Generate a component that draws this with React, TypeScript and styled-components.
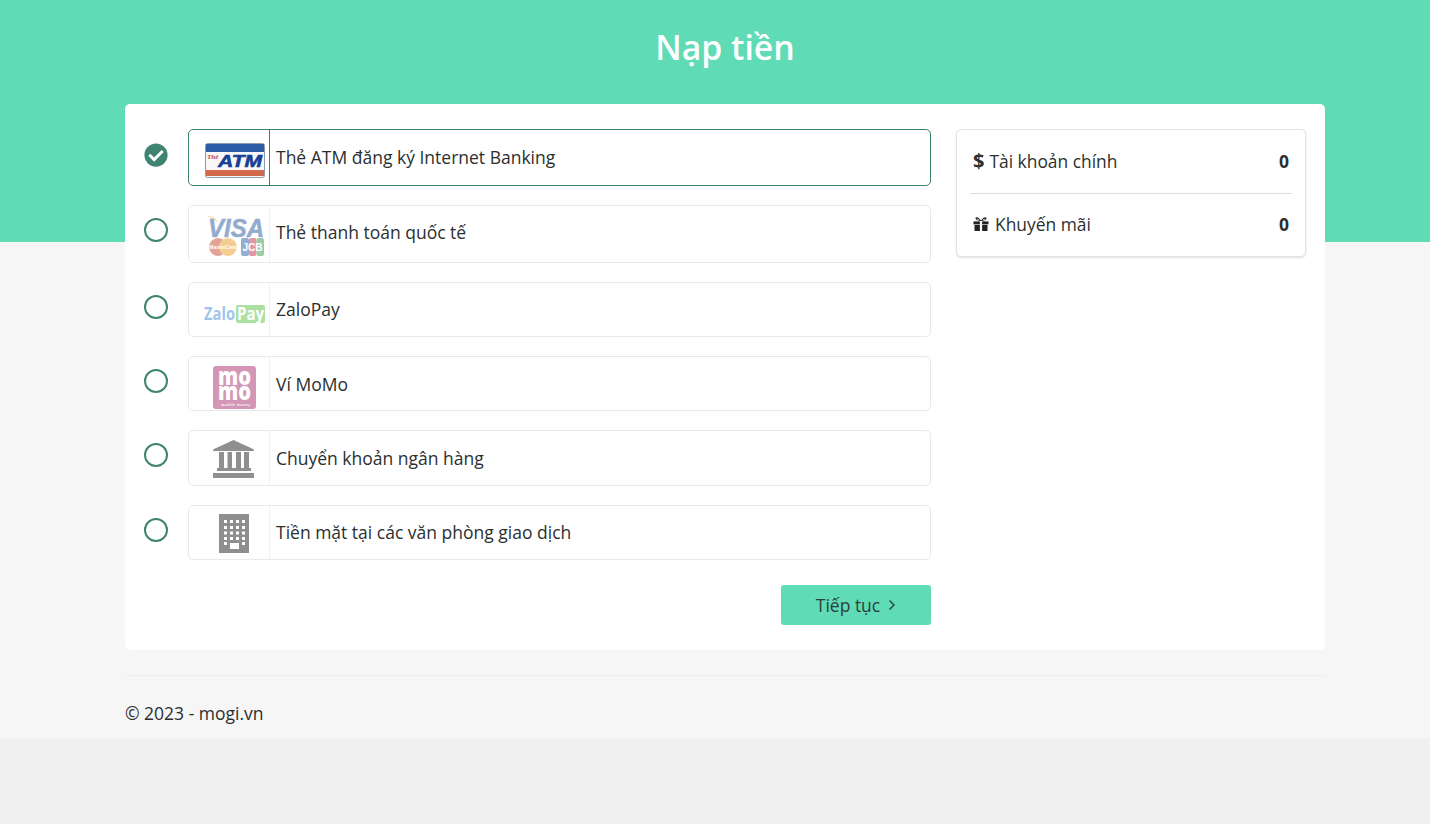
import styled, { createGlobalStyle } from "styled-components";
import { FaCheckCircle } from "react-icons/fa";
import { ReactNode } from "react";

const GlobalStyle = createGlobalStyle`
  html, body {
    margin: 0;
    padding: 0;
    background: #f0f0f0;
    font-family: "Open Sans", "Liberation Sans", sans-serif;
    color: #2b2f30;
  }
`;

const Page = styled.div`
  background: #f6f6f6;
  height: 738px;
`;

const Banner = styled.header`
  height: 242px;
  padding-left: 20px;
  box-sizing: border-box;
  background: #5fdbb6;
`;

const Title = styled.h1`
  margin: 0;
  color: #fff;
  font-size: 33.8px;
  font-weight: 600;
  line-height: 95px;
  text-align: center;
`;

const Container = styled.main`
  width: 1200px;
  margin: -138px 0 0 125px;
`;

const Card = styled.section`
  display: grid;
  grid-template-columns: 787px 350px;
  column-gap: 25px;
  padding: 25px 19px;
  background: #fff;
  border-radius: 5px;
`;

const MethodList = styled.div`
  display: flex;
  flex-direction: column;
  gap: 19px;
`;

const MethodLine = styled.label`
  display: flex;
  gap: 20px;
  align-items: flex-start;
`;

const Radio = styled.span`
  flex: none;
  width: 24px;
  height: 24px;
  margin-top: 13px;
  box-sizing: border-box;
  border: 2px solid #3f8471;
  border-radius: 50%;
`;

const Checked = styled(FaCheckCircle)`
  flex: none;
  width: 24px;
  height: 24px;
  margin-top: 14px;
  color: #3f8471;
`;

const MethodBox = styled.div<{ $height: number; $active?: boolean }>`
  flex: 1;
  display: flex;
  box-sizing: border-box;
  height: ${(p) => p.$height}px;
  border: 1px solid ${(p) => (p.$active ? "#3a8170" : "#e9e9e9")};
  border-radius: 5px;
`;

const LogoCell = styled.div<{ $active?: boolean }>`
  flex: none;
  box-sizing: border-box;
  width: 81px;
  padding: 9px 0 0 10px;
  border-right: 1px solid ${(p) => (p.$active ? "#3a8170" : "#f0f0f0")};
  display: flex;
  justify-content: center;
  align-items: flex-start;
`;

const LogoSvg = styled.svg<{ $faded?: boolean }>`
  width: 62px;
  height: 44px;
  overflow: visible;
  opacity: ${(p) => (p.$faded ? 0.5 : 1)};
`;

const MethodLabel = styled.span<{ $lineHeight: number }>`
  padding-left: 6px;
  font-size: 17.5px;
  line-height: ${(p) => p.$lineHeight}px;
`;

const Actions = styled.div`
  display: flex;
  justify-content: flex-end;
  margin-top: 6px;
`;

const NextButton = styled.button`
  display: flex;
  align-items: center;
  justify-content: center;
  gap: 8px;
  width: 150px;
  height: 40px;
  border: 0;
  border-radius: 3px;
  background: #5fdbb6;
  color: #2b3f3c;
  font-family: inherit;
  font-size: 17.5px;
`;

const Balance = styled.aside`
  align-self: start;
  box-sizing: border-box;
  height: 128px;
  padding: 0 13px;
  background: #fff;
  border: 1px solid #e3e3e3;
  border-radius: 5px;
  box-shadow: 0 1px 2px rgba(0, 0, 0, 0.12);
`;

const BalanceRow = styled.div`
  display: flex;
  align-items: center;
  justify-content: space-between;
  box-sizing: border-box;
  height: 63px;
  padding: 0 3px 2px;
  font-size: 17.4px;
  & + & {
    border-top: 1px solid #dcdcdc;
    padding-bottom: 3px;
  }
`;

const BalanceName = styled.span`
  display: flex;
  align-items: center;
  gap: 6px;
`;

const Dollar = styled.b`
  font-size: 20px;
  font-weight: 700;
  line-height: 24px;
  margin-right: -1px;
`;

const Amount = styled.b`
  font-weight: 700;
  font-size: 17.5px;
`;

const Footer = styled.footer`
  margin-top: 25px;
  border-top: 1px solid #eeeeee;
  padding-top: 23px;
  font-size: 17.5px;
  line-height: 28px;
`;

function AtmLogo() {
  return (
    <LogoSvg viewBox="0 0 62 44">
      <rect x="2.5" y="4.5" width="59" height="34" rx="2" fill="#f8f8fa" stroke="#8f9aa8" />
      <rect x="3" y="5" width="58" height="8" fill="#2d5ca6" />
      <rect x="3" y="31" width="58" height="6" fill="#d2694a" />
      <text x="4" y="20" fontSize="7" fontWeight="700" fontStyle="italic" fill="#c8402c" fontFamily="Liberation Serif, serif">
        Thẻ
      </text>
      <text
        x="15"
        y="28"
        fontSize="17"
        fontWeight="700"
        fontStyle="italic"
        fill="#173f94"
        stroke="#173f94"
        strokeWidth="0.6"
        fontFamily="Liberation Sans, sans-serif"
        textLength="44"
        lengthAdjust="spacingAndGlyphs"
      >
        ATM
      </text>
    </LogoSvg>
  );
}

function VisaLogo() {
  return (
    <LogoSvg viewBox="0 0 62 44" $faded>
      <path d="M4 1 C9 1 13 3 15 7 C12 5 9 3 4 1Z" fill="#eeb04a" />
      <text
        x="5"
        y="22"
        fontSize="26"
        fontWeight="700"
        fontStyle="italic"
        fill="#2b5a9e"
        stroke="#2b5a9e"
        strokeWidth="0.6"
        fontFamily="Liberation Sans, sans-serif"
        textLength="56"
        lengthAdjust="spacingAndGlyphs"
      >
        VISA
      </text>
      <circle cx="15" cy="32" r="9" fill="#c9492e" />
      <circle cx="25" cy="32" r="9" fill="#ef9b2d" />
      <text x="20" y="34" fontSize="5" fontWeight="700" textAnchor="middle" fill="#fff" fontFamily="Liberation Sans, sans-serif">
        MasterCard
      </text>
      <rect x="38" y="23" width="8" height="18" rx="2" fill="#2a5da8" />
      <rect x="46" y="23" width="7.5" height="18" rx="2" fill="#c62f45" />
      <rect x="53.5" y="23" width="7.5" height="18" rx="2" fill="#3c9a4c" />
      <text x="49.5" y="36" fontSize="10" fontWeight="700" textAnchor="middle" fill="#fff" fontFamily="Liberation Sans, sans-serif">
        JCB
      </text>
    </LogoSvg>
  );
}

function ZaloLogo() {
  return (
    <LogoSvg viewBox="0 0 62 44" $faded>
      <rect x="33" y="13" width="29" height="18" rx="2" fill="#5cc24a" />
      <text x="1" y="28" fontSize="17" fontWeight="700" fill="#3f8fdc" fontFamily="Open Sans, sans-serif" textLength="31" lengthAdjust="spacingAndGlyphs">
        Zalo
      </text>
      <text x="34" y="28" fontSize="17" fontWeight="700" fill="#fff" fontFamily="Open Sans, sans-serif" textLength="27" lengthAdjust="spacingAndGlyphs">
        Pay
      </text>
    </LogoSvg>
  );
}

// one <text> with tspans, the lines of this logo sit tighter than their line boxes
function MomoLogo() {
  return (
    <LogoSvg viewBox="0 0 62 44" $faded>
      <rect x="10" y="0" width="43" height="43" rx="3" fill="#a9306f" />
      <text fill="#fff" fontFamily="Open Sans, sans-serif">
        <tspan x="15" y="19" fontSize="25" fontWeight="800" textLength="33" lengthAdjust="spacingAndGlyphs">
          mo
        </tspan>
        <tspan x="15" y="34" fontSize="25" fontWeight="800" textLength="33" lengthAdjust="spacingAndGlyphs">
          mo
        </tspan>
        <tspan x="18" y="40" fontSize="3.6" fontWeight="600" letterSpacing="0.4">
          mobile money
        </tspan>
      </text>
    </LogoSvg>
  );
}

function BankLogo() {
  return (
    <LogoSvg viewBox="0 0 62 44">
      <path
        fill="#8f8f8f"
        d="M30.5 0 L50 9 Q51 9.5 51 10.5 V11 H10 V10.5 Q10 9.5 11 9 Z M16 12 H21 V28 H16 Z M24.5 12 H29 V28 H24.5 Z M33 12 H38 V28 H33 Z M41 12 H46 V28 H41 Z M14 28 H48 V31 H14 Z M10 33 H51 V38 H10 Z"
      />
    </LogoSvg>
  );
}

const windowRows = [5, 11, 16.5, 22];
const windowCols = [21, 27, 33, 39];

function BuildingLogo() {
  return (
    <LogoSvg viewBox="0 0 62 44">
      <rect x="16" y="-1" width="30" height="39" fill="#8f8f8f" />
      {windowRows.map((y) =>
        windowCols.map((x) => <rect key={`${x}-${y}`} x={x} y={y} width="3" height="3" fill="#fff" />)
      )}
      <rect x="21" y="27" width="3" height="3" fill="#fff" />
      <rect x="39" y="27" width="3" height="3" fill="#fff" />
      <rect x="27" y="28" width="9" height="6" fill="#fff" />
    </LogoSvg>
  );
}

function GiftLogo() {
  return (
    <svg width="16" height="14" viewBox="0 0 16 14" fill="#222">
      <path d="M8 3.6 C6 0.4 3.4 -0.6 2.6 0.8 C1.9 2.2 4.2 3.6 7 4 H9 C11.8 3.6 14.1 2.2 13.4 0.8 C12.6 -0.6 10 0.4 8 3.6 Z M4 1.8 C4.8 1.7 5.8 2.3 6.4 3.2 C5.2 3 4 2.6 4 1.8 Z M12 1.8 C11.2 1.7 10.2 2.3 9.6 3.2 C10.8 3 12 2.6 12 1.8 Z" fillRule="evenodd" />
      <rect x="0.5" y="4.4" width="6.4" height="3" />
      <rect x="9.1" y="4.4" width="6.4" height="3" />
      <rect x="1.5" y="8" width="5.4" height="6" />
      <rect x="9.1" y="8" width="5.4" height="6" />
    </svg>
  );
}

interface IMethod {
  name: string;
  height: number;
  lineHeight: number;
  logo: ReactNode;
}

const methods: IMethod[] = [
  { name: "Thẻ ATM đăng ký Internet Banking", height: 57, lineHeight: 54, logo: <AtmLogo /> },
  { name: "Thẻ thanh toán quốc tế", height: 58, lineHeight: 52, logo: <VisaLogo /> },
  { name: "ZaloPay", height: 55, lineHeight: 52, logo: <ZaloLogo /> },
  { name: "Ví MoMo", height: 55, lineHeight: 54, logo: <MomoLogo /> },
  { name: "Chuyển khoản ngân hàng", height: 56, lineHeight: 54, logo: <BankLogo /> },
  { name: "Tiền mặt tại các văn phòng giao dịch", height: 55, lineHeight: 52, logo: <BuildingLogo /> },
];

function App() {
  return (
    <Page>
      <GlobalStyle />
      <Banner>
        <Title>Nạp tiền</Title>
      </Banner>
      <Container>
        <Card>
          <MethodList>
            {methods.map((method, i) => (
              <MethodLine key={method.name}>
                {i === 0 ? <Checked /> : <Radio />}
                <MethodBox $height={method.height} $active={i === 0}>
                  <LogoCell $active={i === 0}>{method.logo}</LogoCell>
                  <MethodLabel $lineHeight={method.lineHeight}>{method.name}</MethodLabel>
                </MethodBox>
              </MethodLine>
            ))}
            <Actions>
              <NextButton>
                Tiếp tục
                <svg width="8" height="12" viewBox="0 0 8 12" fill="none" stroke="#2b3f3c" strokeWidth="1.4">
                  <path d="M1.5 1.5 L6 6 L1.5 10.5" />
                </svg>
              </NextButton>
            </Actions>
          </MethodList>
          <Balance>
            <BalanceRow>
              <BalanceName>
                <Dollar>$</Dollar>
                Tài khoản chính
              </BalanceName>
              <Amount>0</Amount>
            </BalanceRow>
            <BalanceRow>
              <BalanceName>
                <GiftLogo />
                Khuyến mãi
              </BalanceName>
              <Amount>0</Amount>
            </BalanceRow>
          </Balance>
        </Card>
        <Footer>© 2023 - mogi.vn</Footer>
      </Container>
    </Page>
  );
}

export default App;
